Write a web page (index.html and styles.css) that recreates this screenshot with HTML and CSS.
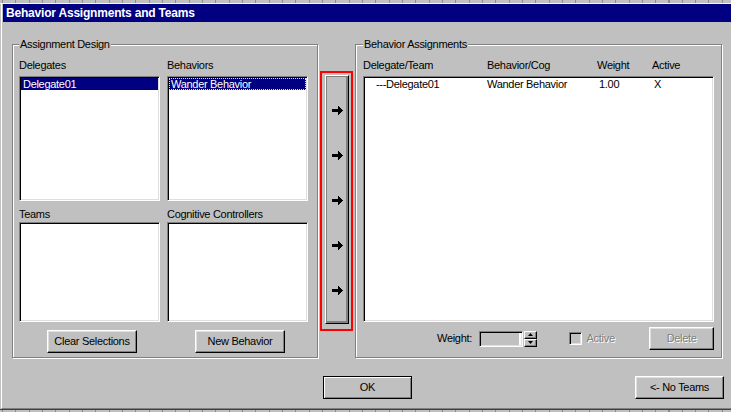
FILE: index.html
```html
<!DOCTYPE html>
<html lang="en">
<head>
<meta charset="utf-8">
<title>Behavior Assignments and Teams</title>
<link rel="stylesheet" href="styles.css">
</head>
<body>
<div class="ruler ruler-top"></div>
<div class="window">
  <div class="titlebar">Behavior Assignments and Teams</div>
  <div class="client">
    <div class="main-row">
      <section class="group group-left">
        <div class="group-title">Assignment Design</div>
        <div class="design-grid">
          <div class="field-label">Delegates</div>
          <div class="field-label">Behaviors</div>
          <div class="listbox list-tall"><div class="item selected">Delegate01</div></div>
          <div class="listbox list-tall"><div class="item selected focused">Wander Behavior</div></div>
          <div class="field-label label-lower">Teams</div>
          <div class="field-label label-lower">Cognitive Controllers</div>
          <div class="listbox list-short"></div>
          <div class="listbox list-short"></div>
          <div class="btn-cell"><button class="btn btn-design">Clear Selections</button></div>
          <div class="btn-cell"><button class="btn btn-design">New Behavior</button></div>
        </div>
      </section>

      <div class="arrow-frame">
        <div class="arrow-btn">
          <svg class="arrow" width="11" height="9" viewBox="0 0 11 9"><rect x="0" y="3" width="7" height="3"/><polygon points="6,0 11,4.5 6,9"/></svg>
          <svg class="arrow" width="11" height="9" viewBox="0 0 11 9"><rect x="0" y="3" width="7" height="3"/><polygon points="6,0 11,4.5 6,9"/></svg>
          <svg class="arrow" width="11" height="9" viewBox="0 0 11 9"><rect x="0" y="3" width="7" height="3"/><polygon points="6,0 11,4.5 6,9"/></svg>
          <svg class="arrow" width="11" height="9" viewBox="0 0 11 9"><rect x="0" y="3" width="7" height="3"/><polygon points="6,0 11,4.5 6,9"/></svg>
          <svg class="arrow" width="11" height="9" viewBox="0 0 11 9"><rect x="0" y="3" width="7" height="3"/><polygon points="6,0 11,4.5 6,9"/></svg>
        </div>
      </div>

      <section class="group group-right">
        <div class="group-title">Behavior Assignments</div>
        <div class="assign-head">
          <span>Delegate/Team</span><span>Behavior/Cog</span><span>Weight</span><span>Active</span>
        </div>
        <div class="listbox assign-list">
          <div class="assign-row">
            <span class="c-del">---Delegate01</span><span>Wander Behavior</span><span class="c-num">1.00</span><span class="c-num">X</span>
          </div>
        </div>
        <div class="assign-controls">
          <span class="ctl-label">Weight:</span>
          <span class="edit"></span>
          <span class="spin">
            <span class="spin-btn"><svg width="5" height="3" viewBox="0 0 5 3"><polygon points="2.5,0 5,3 0,3"/></svg></span>
            <span class="spin-btn"><svg width="5" height="3" viewBox="0 0 5 3"><polygon points="0,0 5,0 2.5,3"/></svg></span>
          </span>
          <span class="checkbox"></span>
          <span class="ctl-label disabled check-label">Active</span>
          <button class="btn btn-delete disabled">Delete</button>
        </div>
      </section>
    </div>

    <div class="footer-row">
      <button class="btn btn-default">OK</button>
      <button class="btn btn-noteams">&lt;- No Teams</button>
    </div>
  </div>
</div>
<div class="ruler ruler-bottom"></div>
</body>
</html>
```

FILE: styles.css
```css
* { box-sizing: border-box; }

html, body {
  margin: 0;
  padding: 0;
  width: 731px;
  height: 412px;
  overflow: hidden;
  background: #c0c0c0;
  font-family: "Liberation Sans", Arial, sans-serif;
  font-size: 11px;
  line-height: 13px;
  letter-spacing: -0.3px;
  color: #000;
}

.ruler {
  background-color: #c0c0c0;
  background-image: repeating-linear-gradient(to right, transparent 0 2px, #8a8a8a 2px 3px, transparent 3px 13.33px);
}
.ruler-top {
  height: 4px;
  border-bottom: 1px solid #f4f4f4;
}
.ruler-bottom {
  height: 3px;
  border-top: 1px solid #404040;
}

.window {
  margin-left: 1px;
  border-left: 1px solid #ffffff;
  padding-left: 1px;
  border-bottom: 1px solid #808080;
}

.titlebar {
  height: 18px;
  line-height: 18px;
  background: #000080;
  color: #ffffff;
  font-weight: bold;
  font-size: 12px;
  letter-spacing: -0.2px;
  padding-left: 3px;
  white-space: nowrap;
}

.client {
  height: 386px;
  padding-top: 22px;
}

.main-row {
  display: flex;
  align-items: flex-start;
  padding-left: 9px;
}

.group {
  height: 314px;
  border: 1px solid #808080;
  box-shadow: inset 1px 1px #ffffff, 1px 1px #ffffff;
}
.group-left { width: 306px; }
.group-right { width: 367px; padding: 0 7px; }

.group-title {
  width: max-content;
  margin: -7px 0 0 6px;
  padding: 0 1px;
  background: #c0c0c0;
  line-height: 13px;
}
.group-right .group-title { margin-left: 0; }

.design-grid {
  display: grid;
  grid-template-columns: 141px 141px;
  column-gap: 7px;
  padding-left: 6px;
  margin-top: 8px;
}

.field-label { height: 13px; white-space: nowrap; }
.label-lower { margin-top: 7px; }

.listbox {
  background: #ffffff;
  border: 1px solid;
  border-color: #808080 #ffffff #ffffff #808080;
  box-shadow: inset 1px 1px #000000, inset -1px -1px #dfdfdf;
  padding: 1px;
}
.list-tall { height: 125px; margin-top: 4px; }
.list-short { height: 100px; margin-top: 1px; }

.item {
  height: 12px;
  line-height: 12px;
  padding-left: 2px;
  white-space: nowrap;
}
.item.selected { background: #000080; color: #ffffff; }
.item.focused { outline: 1px dotted #ffff00; outline-offset: -1px; }

.btn-cell {
  margin-top: 8px;
  display: flex;
  justify-content: center;
  padding-left: 5px;
}

.btn {
  font: inherit;
  letter-spacing: inherit;
  color: #000;
  background: #c0c0c0;
  border: 1px solid;
  border-color: #ffffff #000000 #000000 #ffffff;
  box-shadow: inset -1px -1px #808080, inset 1px 1px #dfdfdf;
  padding: 0;
  height: 23px;
  line-height: 13px;
  white-space: nowrap;
}
.btn-design { width: 90px; }

.arrow-frame {
  width: 33px;
  height: 260px;
  margin: 27px 2px 0 2px;
  border: 2px solid #ff0000;
  padding: 2px 2px 5px 3px;
}
.arrow-btn {
  width: 24px;
  height: 249px;
  border: 1px solid;
  border-color: #ffffff #000000 #000000 #ffffff;
  box-shadow: inset 1px 1px #808080, inset -2px -2px #808080;
  display: flex;
  flex-direction: column;
  align-items: center;
  gap: 36px;
  padding-top: 30px;
}
.arrow { display: block; fill: #000; shape-rendering: crispEdges; }

.assign-head {
  display: grid;
  grid-template-columns: 124px 110px 55px auto;
  margin-top: 8px;
  height: 13px;
  white-space: nowrap;
}

.assign-list { height: 246px; margin-top: 4px; }
.assign-row {
  display: grid;
  grid-template-columns: 122px 110px 55px auto;
  height: 13px;
  white-space: nowrap;
}
.c-del { padding-left: 11px; }
.c-num { padding-left: 2px; }

.assign-controls {
  display: flex;
  align-items: center;
  height: 23px;
  margin-top: 5px;
}
.ctl-label { white-space: nowrap; }
.assign-controls > .ctl-label:first-child { margin-left: 74px; width: 42px; }

.edit {
  width: 44px;
  height: 16px;
  border: 1px solid;
  border-color: #808080 #ffffff #ffffff #808080;
  box-shadow: inset 1px 1px #000000, inset -1px -1px #dfdfdf, inset -3px 0 #ffffff;
  background: #c0c0c0;
}

.spin {
  display: flex;
  flex-direction: column;
  width: 13px;
  height: 16px;
  margin-left: 1px;
}
.spin-btn {
  flex: 1;
  display: flex;
  align-items: center;
  justify-content: center;
  border: 1px solid;
  border-color: #ffffff #000000 #000000 #ffffff;
  box-shadow: inset -1px -1px #808080;
  background: #c0c0c0;
}
.spin-btn svg { display: block; fill: #000; }

.checkbox {
  width: 13px;
  height: 13px;
  margin-left: 32px;
  border: 1px solid;
  border-color: #808080 #ffffff #ffffff #808080;
  box-shadow: inset 1px 1px #000000, inset -1px -1px #dfdfdf;
  background: #c0c0c0;
}
.check-label { margin-left: 5px; width: 63px; }

.disabled {
  color: #808080;
  text-shadow: 1px 1px #ffffff;
}
.btn-delete { width: 65px; }

.footer-row {
  display: flex;
  margin-top: 18px;
  padding-left: 320px;
  padding-right: 7px;
}
.btn-default {
  width: 89px;
  border: 1px solid #000000;
  box-shadow: inset 1px 1px #ffffff, inset -1px -1px #808080;
}
.btn-noteams {
  width: 89px;
  margin-left: auto;
}
```
